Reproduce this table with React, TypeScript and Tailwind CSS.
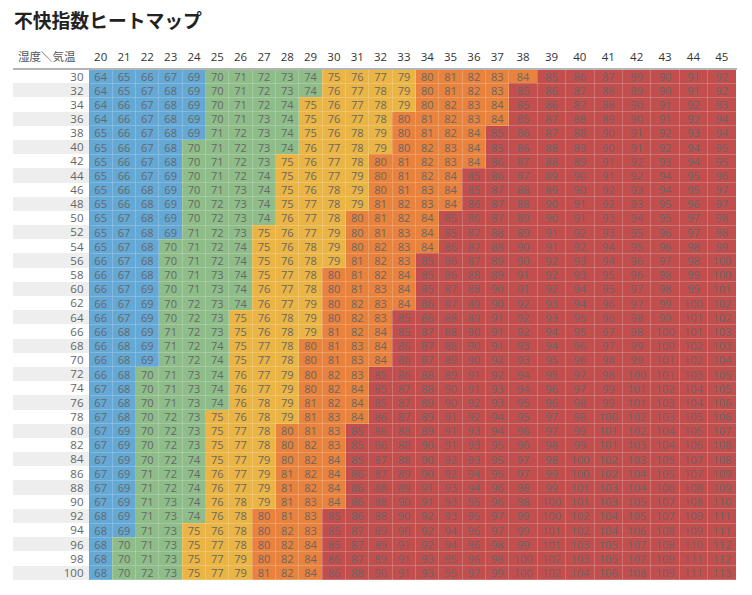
import React from 'react';

const temps = Array.from({ length: 26 }, (_, i) => 20 + i);
const humids = Array.from({ length: 36 }, (_, i) => 30 + i * 2);

// 不快指数 = 0.81T + 0.01H(0.99T - 14.3) + 46.3
const calcDI = (t: number, h: number) => {
  const v = 0.81 * t + 0.01 * h * (0.99 * t - 14.3) + 46.3;
  return Math.round(Math.round(v * 1000) / 1000);
};

const cellColor = (di: number) => {
  if (di < 70) return 'bg-[#64a8d6]';
  if (di < 75) return 'bg-[#8fbd8a]';
  if (di < 80) return 'bg-[#eab545]';
  if (di < 85) return 'bg-[#e8823c]';
  return 'bg-[#c24e4e]';
};

export default function App() {
  return (
    <div
      className="bg-white w-[752px] h-[595px] px-[13px] pt-[6px]"
      style={{ fontFamily: '"Open Sans", "Noto Sans CJK JP", sans-serif' }}
    >
      <h1
        className="h-[28px] leading-[28px] text-[18.8px] font-bold text-[#222] pl-[1px]"
        style={{ fontFamily: '"Noto Sans CJK JP", sans-serif' }}
      >
        不快指数ヒートマップ
      </h1>
      <table className="mt-[12px] w-[723px] table-fixed border-collapse">
        <colgroup>
          <col className="w-[76px]" />
          {temps.map((t) => (
            <col key={t} className={t >= 38 ? 'w-[28.4px]' : 'w-[23.33px]'} />
          ))}
        </colgroup>
        <thead>
          <tr className="border-b-2 border-[#b4b4b4]">
            <th
              className="h-[23px] pb-[1px] pl-[5px] text-left align-middle text-[11.5px] font-normal text-[#555] whitespace-nowrap"
              style={{ fontFamily: '"Noto Sans CJK JP", sans-serif' }}
            >
              湿度＼気温
            </th>
            {temps.map((t) => (
              <th key={t} className="h-[23px] pb-[1px] text-center align-middle text-[11.5px] font-normal text-[#333]">
                {t}
              </th>
            ))}
          </tr>
        </thead>
        <tbody>
          {humids.map((h, i) => (
            <tr key={h}>
              <td
                className={`h-[14.2px] p-0 pr-[5px] text-right align-middle text-[11.5px] leading-none text-[#666] border-r border-[#8a9aa8] ${
                  i % 2 === 1 ? 'bg-[#eeeeee]' : 'bg-white'
                }`}
              >
                {h}
              </td>
              {temps.map((t) => {
                const di = calcDI(t, h);
                return (
                  <td
                    key={t}
                    className={`h-[14.2px] p-0 text-center align-middle text-[11px] leading-none text-[#676767] border border-white/20 ${cellColor(di)}`}
                  >
                    {di}
                  </td>
                );
              })}
            </tr>
          ))}
        </tbody>
      </table>
    </div>
  );
}
